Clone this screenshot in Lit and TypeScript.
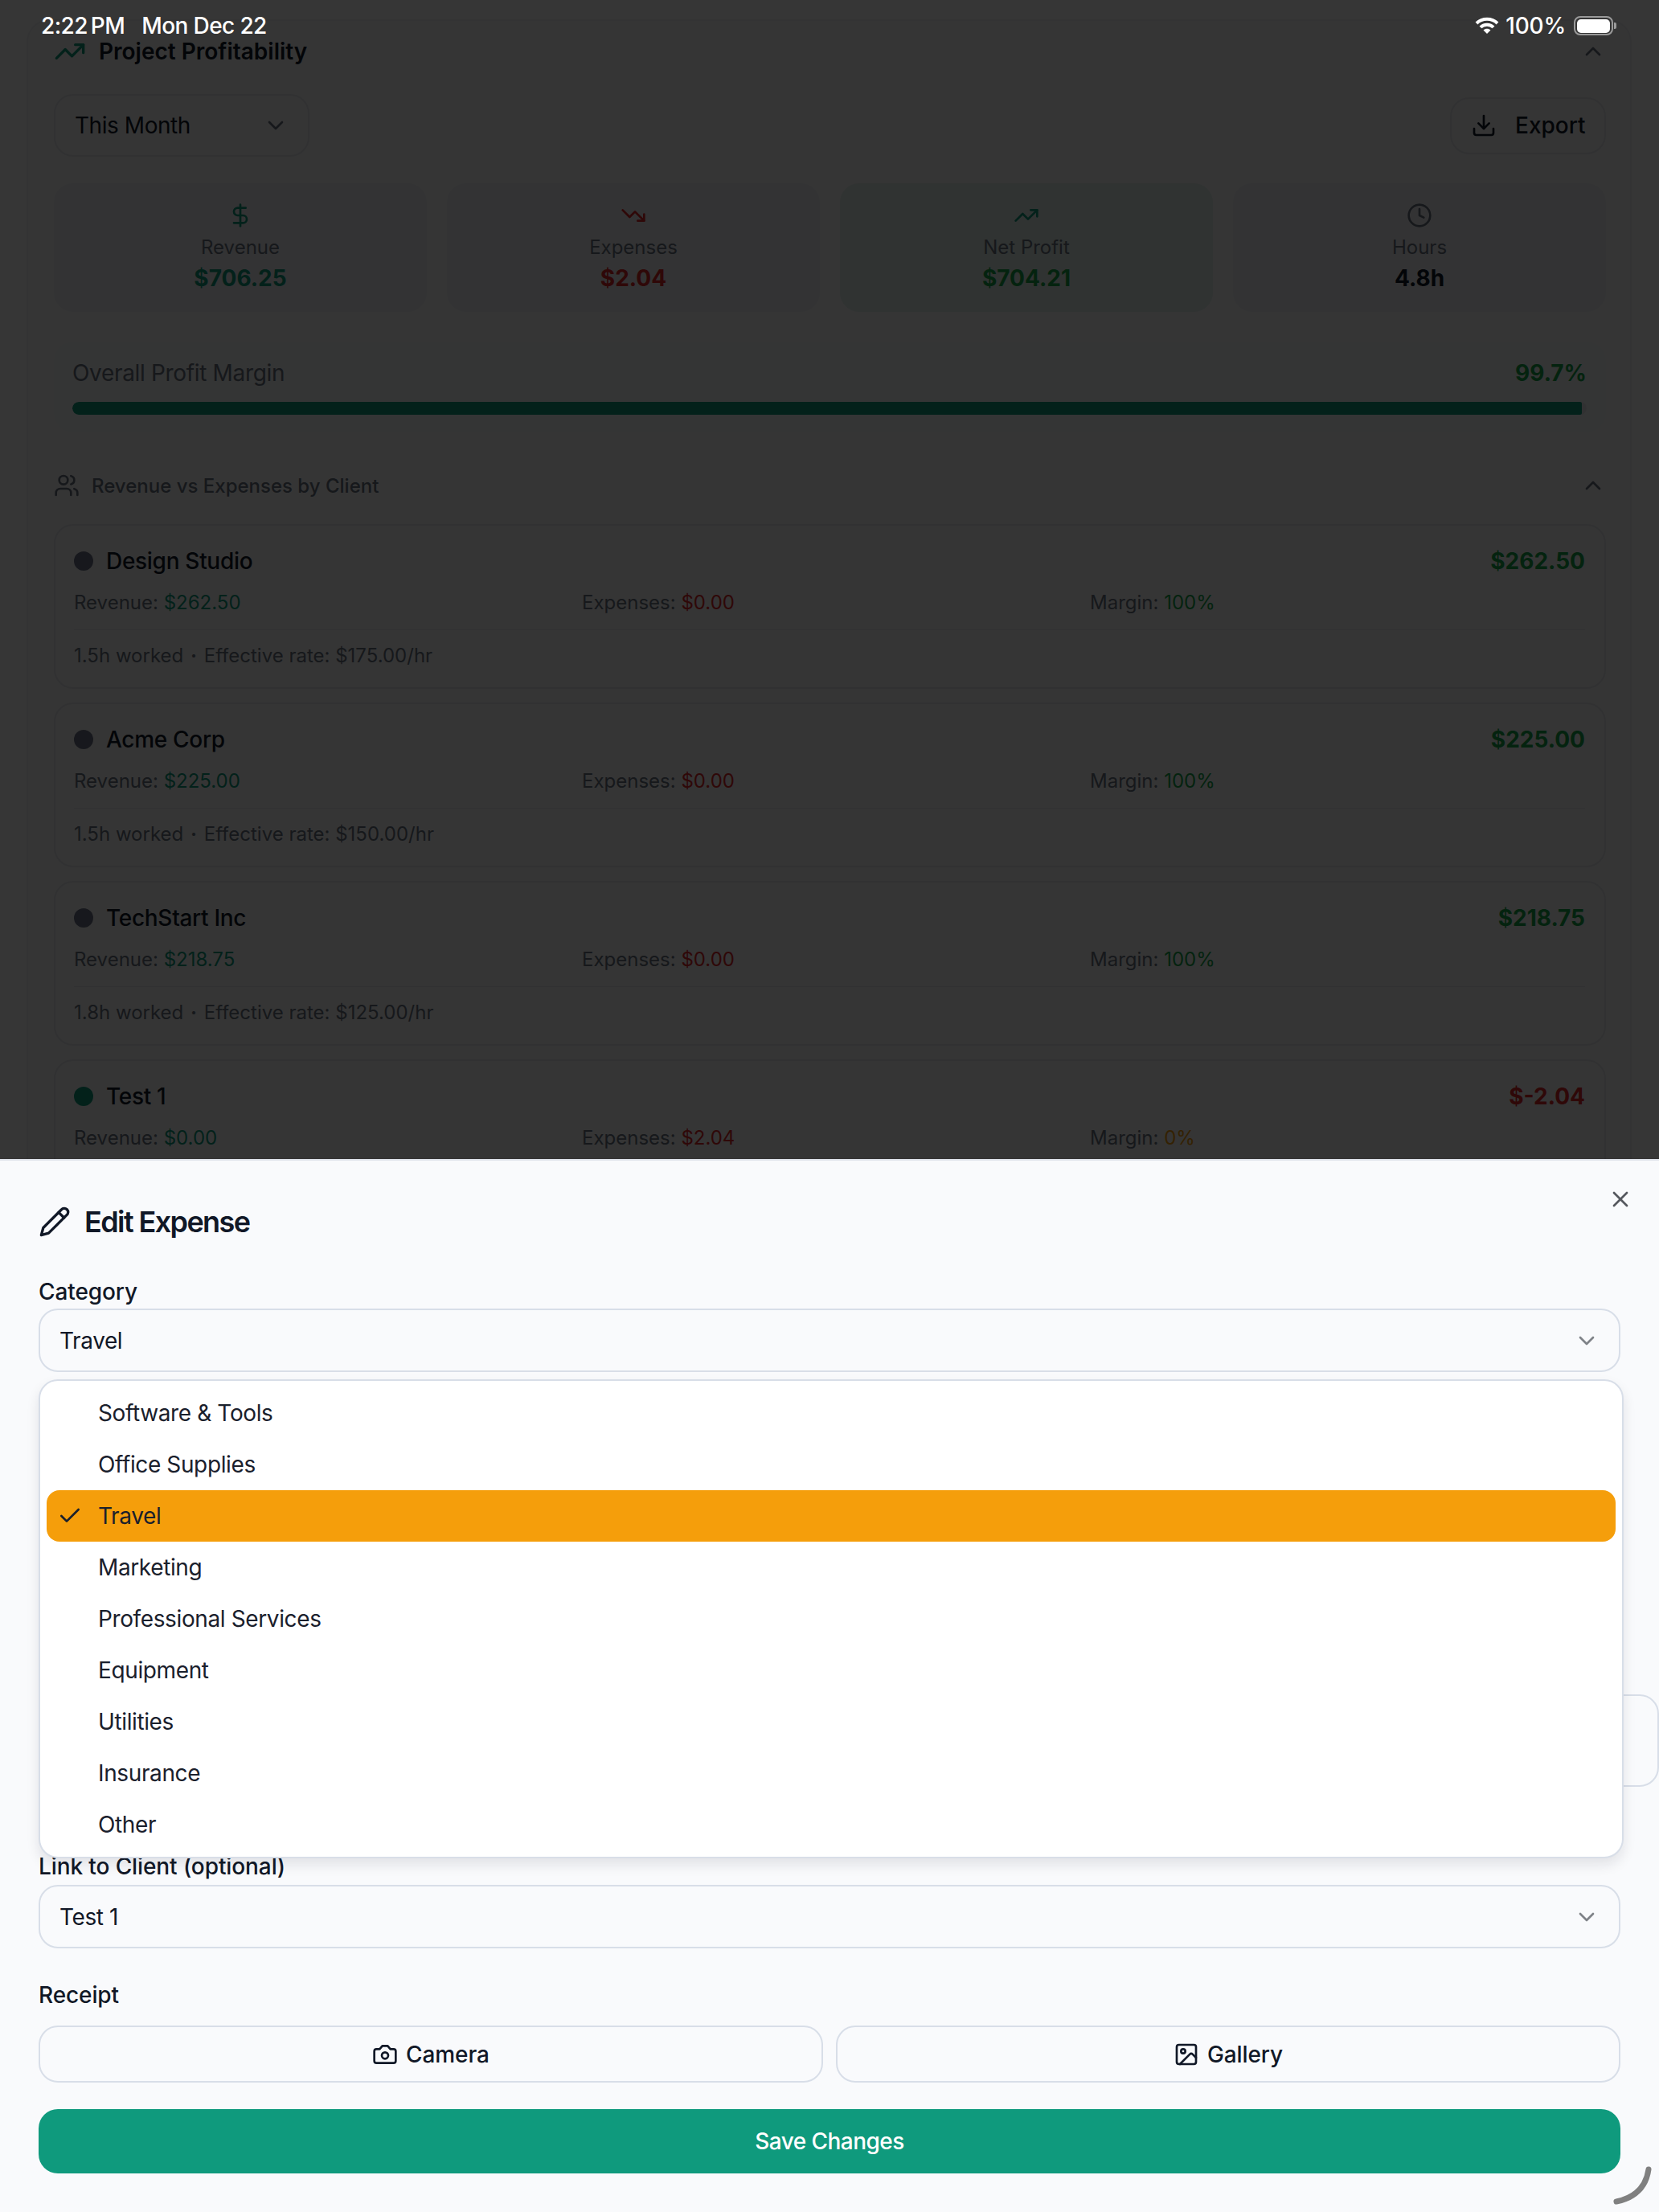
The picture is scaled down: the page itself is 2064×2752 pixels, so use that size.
import { LitElement, html, css, svg } from 'lit';
import { customElement } from 'lit/decorators.js';

const icons = {
  trendUp: svg`<polyline points="22 7 13.5 15.5 8.5 10.5 2 17"/><polyline points="16 7 22 7 22 13"/>`,
  trendDown: svg`<polyline points="22 17 13.5 8.5 8.5 13.5 2 7"/><polyline points="16 17 22 17 22 11"/>`,
  dollar: svg`<line x1="12" x2="12" y1="2" y2="22"/><path d="M17 5H9.5a3.5 3.5 0 0 0 0 7h5a3.5 3.5 0 0 1 0 7H6"/>`,
  clock: svg`<circle cx="12" cy="12" r="10"/><polyline points="12 6 12 12 16 14"/>`,
  chevronDown: svg`<path d="m6 9 6 6 6-6"/>`,
  chevronUp: svg`<path d="m18 15-6-6-6 6"/>`,
  download: svg`<path d="M21 15v4a2 2 0 0 1-2 2H5a2 2 0 0 1-2-2v-4"/><polyline points="7 10 12 15 17 10"/><line x1="12" x2="12" y1="15" y2="3"/>`,
  users: svg`<path d="M16 21v-2a4 4 0 0 0-4-4H6a4 4 0 0 0-4 4v2"/><circle cx="9" cy="7" r="4"/><path d="M22 21v-2a4 4 0 0 0-3-3.87"/><path d="M16 3.13a4 4 0 0 1 0 7.75"/>`,
  pencil: svg`<path d="M17 3a2.85 2.83 0 1 1 4 4L7.5 20.5 2 22l1.5-5.5Z"/><path d="m15 5 4 4"/>`,
  close: svg`<path d="M18 6 6 18"/><path d="m6 6 12 12"/>`,
  check: svg`<path d="M20 6 9 17l-5-5"/>`,
  camera: svg`<path d="M14.5 4h-5L7 7H4a2 2 0 0 0-2 2v9a2 2 0 0 0 2 2h16a2 2 0 0 0 2-2V9a2 2 0 0 0-2-2h-3l-2.5-3z"/><circle cx="12" cy="13" r="3"/>`,
  image: svg`<rect x="3" y="3" width="18" height="18" rx="2"/><circle cx="9" cy="9" r="2"/><path d="m21 15-3.086-3.086a2 2 0 0 0-2.828 0L6 21"/>`,
};

const icon = (name: keyof typeof icons, size = 32) => html`<svg
  class="icon"
  width=${size}
  height=${size}
  viewBox="0 0 24 24"
  fill="none"
  stroke="currentColor"
  stroke-width="2"
  stroke-linecap="round"
  stroke-linejoin="round"
>${icons[name]}</svg>`;

const stats = [
  { icon: 'dollar', label: 'Revenue', value: '$706.25', color: 'green' },
  { icon: 'trendDown', label: 'Expenses', value: '$2.04', color: 'red' },
  { icon: 'trendUp', label: 'Net Profit', value: '$704.21', color: 'profit', tint: true },
  { icon: 'clock', label: 'Hours', value: '4.8h', color: 'ink', gray: true },
] as const;

const clients = [
  { name: 'Design Studio', total: '$262.50', rev: '$262.50', exp: '$0.00', margin: '100%', hours: '1.5h', rate: '$175.00' },
  { name: 'Acme Corp', total: '$225.00', rev: '$225.00', exp: '$0.00', margin: '100%', hours: '1.5h', rate: '$150.00' },
  { name: 'TechStart Inc', total: '$218.75', rev: '$218.75', exp: '$0.00', margin: '100%', hours: '1.8h', rate: '$125.00' },
  { name: 'Test 1', total: '$-2.04', rev: '$0.00', exp: '$2.04', margin: '0%', hours: '0.0h', rate: '$0.00', loss: true },
];

const categories = [
  'Software & Tools',
  'Office Supplies',
  'Travel',
  'Marketing',
  'Professional Services',
  'Equipment',
  'Utilities',
  'Insurance',
  'Other',
];

@customElement('app-root')
export class AppRoot extends LitElement {
  static styles = css`
    :host {
      display: block;
      position: relative;
      height: 2752px;
      overflow: hidden;
      background: #fff;
      font-family: Inter, 'Noto Sans', sans-serif;
      font-size: 28px;
      color: #111827;
    }
    * {
      box-sizing: border-box;
    }
    .icon {
      display: block;
      flex: none;
    }

    /* page behind the sheet */
    .page {
      margin: 24px 34px 0 33px;
      padding: 18px 30px 0 32px;
      height: 2800px;
      background: #f9fafb;
      border: 2px solid #f0f1f3;
      border-bottom: 0;
      border-radius: 28px 28px 0 0;
    }
    .head {
      display: flex;
      align-items: center;
      height: 40px;
      font-weight: 600;
    }
    .lead {
      color: #0f9a7d;
      margin-right: 16px;
    }
    .title {
      flex: 1;
    }
    .tools {
      display: flex;
      justify-content: space-between;
      align-items: center;
      margin-top: 33px;
    }
    .range {
      display: flex;
      align-items: center;
      justify-content: space-between;
      width: 318px;
      height: 78px;
      padding: 0 24px;
      border: 2px solid #e5e7eb;
      border-radius: 24px;
      letter-spacing: -0.45px;
    }
    .range .icon {
      color: #6b7280;
    }
    .export {
      display: flex;
      align-items: center;
      gap: 23px;
      width: 194px;
      height: 71px;
      padding: 0 24px;
      border: 2px solid #e5e7eb;
      border-radius: 24px;
      font-weight: 500;
    }
    .stats {
      display: grid;
      grid-template-columns: repeat(4, 1fr);
      gap: 25px;
      margin-top: 33px;
    }
    .stat {
      height: 160px;
      padding-top: 24px;
      display: flex;
      flex-direction: column;
      align-items: center;
      background: #eff1f4;
      border-radius: 24px;
    }
    .stat.tint {
      background: #e0eee9;
    }
    .stat label {
      margin-top: 8px;
      font-size: 24px;
      line-height: 32px;
      color: #6b7280;
    }
    .stat b {
      margin-top: 4px;
      font-size: 28px;
      line-height: 36px;
      font-weight: 700;
    }
    .green {
      color: #0f9a7d;
    }
    .red {
      color: #dc2626;
    }
    .profit {
      color: #16a34a;
    }
    .amber {
      color: #f59e0b;
    }
    .ink {
      color: #111827;
    }
    .muted-icon {
      color: #6b7280;
    }
    .margin {
      margin-top: 37px;
      padding: 22px 24px 22px 23px;
      background: #f6f7f9;
      border-radius: 24px;
    }
    .margin-top {
      display: flex;
      justify-content: space-between;
      line-height: 34px;
      color: #6b7280;
    }
    .margin-top span {
      letter-spacing: -0.33px;
    }
    .margin-top b {
      font-weight: 700;
      color: #16a34a;
    }
    .track {
      margin-top: 19px;
      height: 16px;
      border-radius: 8px;
      background: #e5e7eb;
      overflow: hidden;
    }
    .fill {
      height: 100%;
      background: #0f9a7d;
      border-radius: 8px 2px 2px 8px;
    }
    .sub {
      display: flex;
      align-items: center;
      height: 32px;
      margin-top: 50px;
      font-size: 24px;
      font-weight: 500;
      color: #6b7280;
    }
    .sub-icon {
      margin-right: 15px;
    }
    .clients {
      display: flex;
      flex-direction: column;
      gap: 17px;
      margin-top: 32px;
    }
    .client {
      height: 205px;
      padding: 27px 24px 24px 23px;
      border: 2px solid #e5e7eb;
      border-radius: 24px;
    }
    .client-top {
      display: flex;
      align-items: center;
      line-height: 34px;
      font-weight: 500;
      letter-spacing: -0.3px;
    }
    .dot {
      width: 24px;
      height: 24px;
      margin-right: 16px;
      border-radius: 50%;
      background: #6e7488;
    }
    .dot.on {
      background: #0f9a7d;
    }
    .client-top b {
      margin-left: auto;
      font-weight: 700;
      letter-spacing: 0;
    }
    .client-row {
      display: grid;
      grid-template-columns: repeat(3, 1fr);
      gap: 16px;
      margin-top: 20px;
      font-size: 24px;
      line-height: 30px;
      color: #6b7280;
    }
    .client-note {
      margin-top: 18px;
      padding-top: 17px;
      border-top: 1px solid #e5e7eb;
      font-size: 24px;
      line-height: 30px;
      color: #6b7280;
    }
    .sep {
      margin: 0 2px;
      font-weight: 700;
    }

    .scrim {
      position: absolute;
      inset: 0;
      background: rgba(0, 0, 0, 0.79);
    }

    /* status bar */
    .status {
      position: absolute;
      top: 16px;
      left: 51px;
      right: 53px;
      height: 32px;
      display: flex;
      align-items: center;
      gap: 21px;
      color: #fff;
      font-weight: 500;
      letter-spacing: -0.6px;
    }
    .status .pm {
      margin-left: 4px;
    }
    .status .right {
      margin-left: auto;
      display: flex;
      align-items: center;
      gap: 10px;
      letter-spacing: -0.2px;
    }
    .wifi {
      margin-right: -2px;
    }
    .battery {
      display: flex;
      align-items: center;
      gap: 1px;
    }
    .battery i {
      display: block;
      width: 49px;
      height: 24px;
      padding: 1.5px 2px;
      border: 2px solid #9a9a9a;
      border-radius: 8px;
    }
    .battery i::before {
      content: '';
      display: block;
      height: 100%;
      background: #fff;
      border-radius: 5px;
    }
    .battery u {
      display: block;
      width: 3px;
      height: 8px;
      background: #9a9a9a;
      border-radius: 0 2px 2px 0;
    }

    /* bottom sheet */
    .sheet {
      position: absolute;
      top: 1442px;
      left: 0;
      right: 0;
      bottom: 0;
      padding: 56px 48px 0;
      background: #f9fafc;
      border-top: 2px solid #e0e4ec;
    }
    .close {
      position: absolute;
      top: 32px;
      right: 32px;
      color: #55585e;
    }
    .sheet-title {
      display: flex;
      align-items: center;
      gap: 17px;
      height: 40px;
      font-size: 36px;
      font-weight: 600;
      letter-spacing: -1.6px;
    }
    .field-label {
      line-height: 34px;
      font-weight: 500;
      letter-spacing: -0.1px;
    }
    .select {
      display: flex;
      align-items: center;
      justify-content: space-between;
      height: 79px;
      margin-top: 4px;
      padding: 0 24px;
      border: 2px solid #d8dee8;
      border-radius: 24px;
      letter-spacing: -0.4px;
    }
    .select .icon {
      color: #7f8388;
    }
    .select.link {
      margin-top: 6px;
    }
    .category {
      margin-top: 50px;
    }
    .hidden-fields {
      position: relative;
      height: 598px;
    }
    .hidden-box {
      position: absolute;
      top: 401px;
      left: 0;
      right: -48px;
      height: 115px;
      border: 2px solid #d8dee8;
      border-radius: 24px;
    }
    .menu {
      position: absolute;
      top: 272px;
      left: 48px;
      width: 1972px;
      padding: 8px;
      background: #fff;
      border: 2px solid #d8dee8;
      border-radius: 24px;
      box-shadow: 0 8px 16px rgba(15, 23, 42, 0.1);
    }
    .option {
      position: relative;
      height: 64px;
      padding-left: 64px;
      display: flex;
      align-items: center;
      border-radius: 16px;
      color: #1a202c;
      letter-spacing: -0.38px;
    }
    .option.active {
      background: #f59e0b;
    }
    .option .icon {
      position: absolute;
      left: 13px;
      top: 16px;
    }
    .receipt {
      margin-top: 41px;
    }
    .buttons {
      display: grid;
      grid-template-columns: 1fr 1fr;
      gap: 16px;
      margin-top: 21px;
    }
    .btn {
      display: flex;
      align-items: center;
      justify-content: center;
      gap: 10px;
      height: 71px;
      border: 2px solid #d8dee8;
      border-radius: 24px;
      font-weight: 500;
      letter-spacing: -0.1px;
    }
    .save {
      display: flex;
      align-items: center;
      justify-content: center;
      height: 80px;
      margin-top: 33px;
      background: #0f9a7d;
      border-radius: 24px;
      color: #fff;
      font-weight: 500;
      letter-spacing: -0.55px;
    }
    .corner {
      position: absolute;
      right: 0;
      bottom: 0;
    }
  `;

  render() {
    return html`
      <div class="page">
        <div class="head">
          <span class="lead">${icon('trendUp', 40)}</span>
          <span class="title">Project Profitability</span>
          <span class="muted-icon">${icon('chevronUp')}</span>
        </div>
        <div class="tools">
          <div class="range">This Month ${icon('chevronDown')}</div>
          <div class="export">${icon('download')} Export</div>
        </div>
        <div class="stats">
          ${stats.map(
            (s) => html`
              <div class="stat ${'tint' in s ? 'tint' : ''}">
                <span class=${'gray' in s ? 'muted-icon' : s.color === 'profit' ? 'green' : s.color}>${icon(s.icon)}</span>
                <label>${s.label}</label>
                <b class=${s.color}>${s.value}</b>
              </div>
            `
          )}
        </div>
        <div class="margin">
          <div class="margin-top"><span>Overall Profit Margin</span><b>99.7%</b></div>
          <div class="track"><div class="fill" style="width: 99.7%"></div></div>
        </div>
        <div class="sub">
          <span class="sub-icon">${icon('users')}</span>
          <span class="title">Revenue vs Expenses by Client</span>
          <span class="muted-icon">${icon('chevronUp')}</span>
        </div>
        <div class="clients">
          ${clients.map(
            (c) => html`
              <div class="client">
                <div class="client-top">
                  <span class="dot ${c.loss ? 'on' : ''}"></span>
                  ${c.name}
                  <b class=${c.loss ? 'red' : 'profit'}>${c.total}</b>
                </div>
                <div class="client-row">
                  <span>Revenue: <span class="green">${c.rev}</span></span>
                  <span>Expenses: <span class="red">${c.exp}</span></span>
                  <span>Margin: <span class=${c.loss ? 'amber' : 'profit'}>${c.margin}</span></span>
                </div>
                <div class="client-note">${c.hours} worked <span class="sep">·</span> Effective rate: ${c.rate}/hr</div>
              </div>
            `
          )}
        </div>
      </div>

      <div class="scrim"></div>

      <div class="status">
        <span>2:22<span class="pm">PM</span></span>
        <span>Mon Dec 22</span>
        <div class="right">
          <svg class="wifi" width="30" height="22" viewBox="0 0 30 22" fill="none" stroke="#fff" stroke-width="4">
            <path d="M2 8 C9 1 21 1 28 8" />
            <path d="M7 13 C11 8.500 19 8.500 23 13" />
            <path d="M15 21 L10.500 16.500 C13 14 17 14 19.500 16.500 Z" fill="#fff" stroke="none" />
          </svg>
          <span>100%</span>
          <span class="battery"><i></i><u></u></span>
        </div>
      </div>

      <div class="sheet">
        <div class="close">${icon('close')}</div>
        <div class="sheet-title">${icon('pencil', 40)} Edit Expense</div>

        <div class="field-label category">Category</div>
        <div class="select">Travel ${icon('chevronDown')}</div>

        <div class="hidden-fields"><div class="hidden-box"></div></div>

        <div class="field-label">Link to Client (optional)</div>
        <div class="select link">Test 1 ${icon('chevronDown')}</div>

        <div class="field-label receipt">Receipt</div>
        <div class="buttons">
          <div class="btn">${icon('camera')} Camera</div>
          <div class="btn">${icon('image')} Gallery</div>
        </div>
        <div class="save">Save Changes</div>

        <div class="menu">
          ${categories.map(
            (c) => html`
              <div class="option ${c === 'Travel' ? 'active' : ''}">
                ${c === 'Travel' ? icon('check') : ''} ${c}
              </div>
            `
          )}
        </div>
      </div>

      <svg class="corner" width="64" height="62" viewBox="0 0 64 62" fill="none" stroke="#808080" stroke-width="7" stroke-linecap="round">
        <path d="M51 9 C48 30 35 44 11 49" />
      </svg>
    `;
  }
}
